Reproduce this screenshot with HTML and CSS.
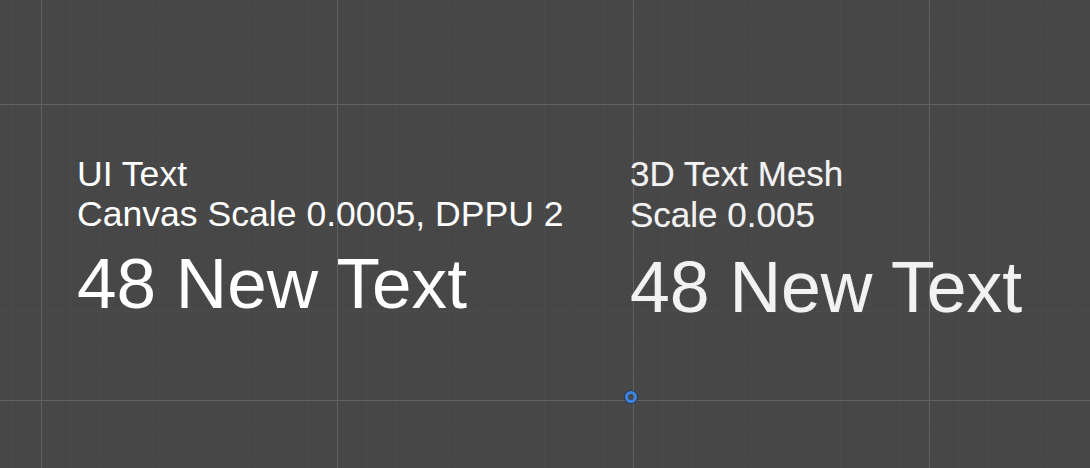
FILE: index.html
```html
<!DOCTYPE html>
<html lang="en">
<head>
<meta charset="utf-8">
<title>Scene View</title>
<link rel="stylesheet" href="styles.css">
</head>
<body>
<main class="scene">
  <section class="label ui-text">
    <div class="line">UI Text</div>
    <div class="line">Canvas Scale 0.0005, DPPU 2</div>
    <div class="big">48 New Text</div>
  </section>
  <section class="label mesh-text">
    <div class="line">3D Text Mesh</div>
    <div class="line">Scale 0.005</div>
    <div class="big">48 New Text</div>
  </section>
  <div class="pivot"></div>
</main>
</body>
</html>
```

FILE: styles.css
```css
html, body {
  margin: 0;
  padding: 0;
}

body {
  width: 1090px;
  height: 468px;
  overflow: hidden;
  background-color: #474747;
  background-image:
    linear-gradient(to right, #616161 0, #616161 1px, transparent 1px),
    linear-gradient(to bottom, #616161 0, #616161 1px, transparent 1px),
    linear-gradient(to right, #4b4b4b 0, #4b4b4b 1px, transparent 1px),
    linear-gradient(to bottom, #4b4b4b 0, #4b4b4b 1px, transparent 1px);
  background-size: 296px 296px, 296px 296px, 29.6px 29.6px, 29.6px 29.6px;
  background-position: 41px 0, 0 104px, 11.4px 0, 0 15.2px;
  font-family: "Liberation Sans", Arial, sans-serif;
}

.scene {
  position: relative;
  display: flex;
  align-items: flex-start;
  height: 468px;
  padding-left: 77px;
  box-sizing: border-box;
}

.label {
  display: flex;
  flex-direction: column;
  white-space: nowrap;
}

.ui-text {
  width: 553px;
  flex: none;
  padding-top: 154px;
  color: #ffffff;
}

.mesh-text {
  padding-top: 153px;
  color: #f2f2f2;
  text-shadow: 0 0 1px rgba(255, 255, 255, 0.35);
}

.line {
  font-size: 35.6px;
  line-height: 40px;
}

.mesh-text .line {
  font-size: 35px;
  line-height: 41px;
}

.big {
  font-size: 71.1px;
  line-height: 80px;
  margin-top: 10px;
}

.mesh-text .big {
  margin-top: 12px;
  font-size: 71.5px;
}

.pivot {
  position: absolute;
  left: 625px;
  top: 391px;
  width: 6px;
  height: 6px;
  border: 3px solid #3b84e4;
  border-radius: 50%;
  box-shadow: 0 0 0 1px #243c5e;
}
```
